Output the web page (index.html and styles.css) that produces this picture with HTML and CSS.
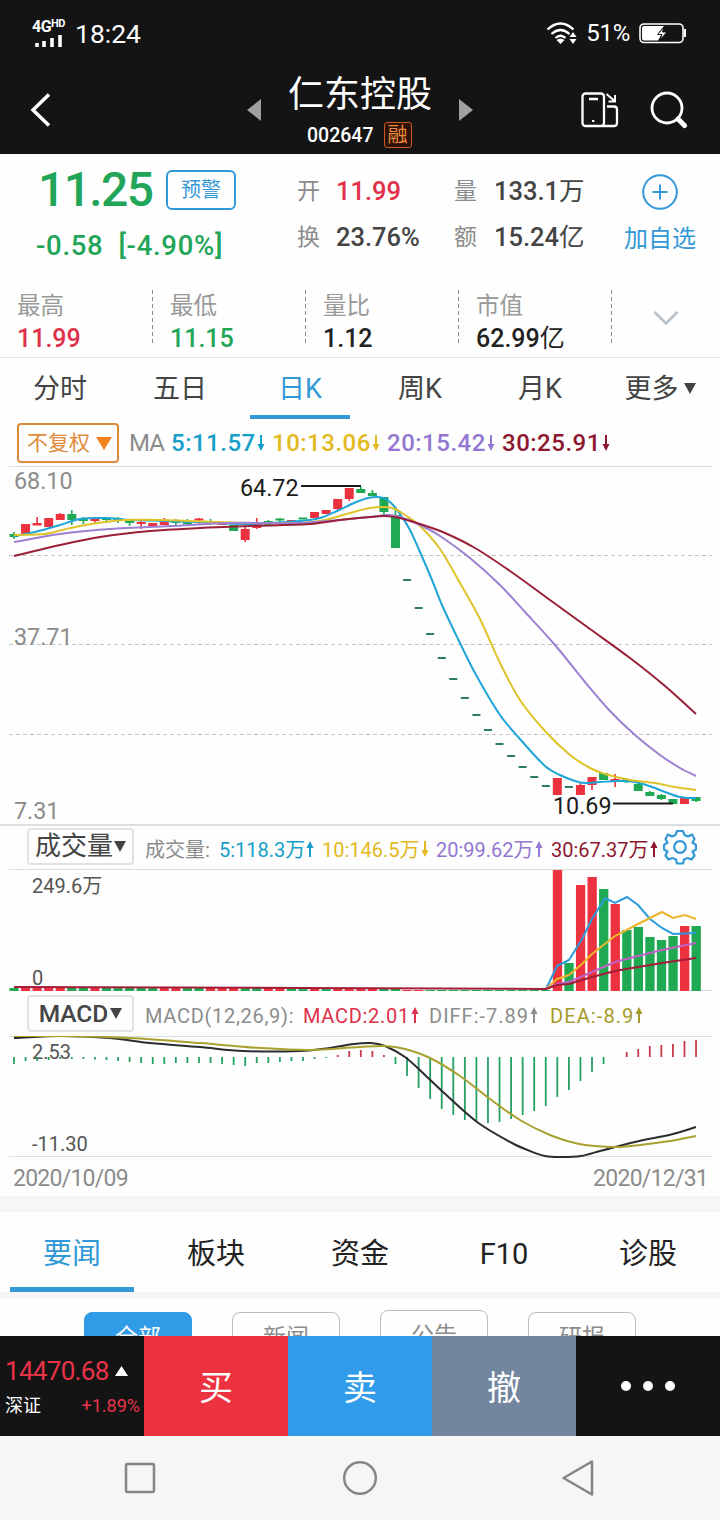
FILE: index.html
```html
<!DOCTYPE html>
<html lang="zh-CN">
<head>
  <meta charset="UTF-8" />
  <meta name="viewport" content="width=device-width, initial-scale=1.0"/>
  <title>仁东控股 002647</title>
  <link rel="stylesheet" href="styles.css">
</head>
<body>
  <svg class="symbols" width="0" height="0">
    <symbol id="down" viewBox="0 0 8 18"><path d="M4 1V13" stroke="currentColor" stroke-width="2"/><path d="M0.5 10H7.5L4 17Z" fill="currentColor"/></symbol>
    <symbol id="up" viewBox="0 0 8 18"><path d="M4 5V17" stroke="currentColor" stroke-width="2"/><path d="M0.5 8H7.5L4 1Z" fill="currentColor"/></symbol>
  </svg>

  <div class="statusbar">
    <div class="signal">
      <div class="net">4G<sup>HD</sup></div>
      <svg width="30" height="13" viewBox="0 0 30 13"><path d="M5 8V12M12 6V12M20 3V12M28 0V12" stroke="#fff" stroke-width="3.6"/></svg>
    </div>
    <span class="clock">18:24</span>
    <svg class="wifi" width="32" height="22" viewBox="0 0 32 22">
      <path d="M1.5 7.5Q14.5-4.5 27.5 7.5M5.5 12Q14.5 4 23.5 12M9.500 16Q14.500 11.500 19.500 16" fill="none" stroke="#fff" stroke-width="2.3"/>
      <path d="M10.500 18Q14.500 15 18.500 18L14.500 22Z" fill="#fff"/>
      <path d="M23.500 15H30.500L27 10ZM23.500 17H30.500L27 22Z" fill="#fff"/>
    </svg>
    <span class="percent">51%</span>
    <svg width="48" height="21" viewBox="0 0 48 21">
      <rect x="1" y="1" width="43" height="18.500" rx="4" fill="none" stroke="#fff" stroke-width="1.600"/>
      <path d="M5 3H25L19 10.500H23L19 17.500H5Q3 17.500 3 15.500V5Q3 3 5 3Z" fill="#fff"/>
      <path d="M25 4L18.500 11.500H23L21 17L28 9H23.500Z" fill="#fff" stroke="#141414"/>
      <path d="M46 6V14" stroke="#fff" stroke-width="2"/>
    </svg>
  </div>

  <div class="header">
    <svg class="back" width="22" height="36" viewBox="0 0 22 36"><path d="M19 2.500L3 18L19 33.500" fill="none" stroke="#fff" stroke-width="3.500"/></svg>
    <svg class="prev" width="14" height="22" viewBox="0 0 14 22"><path d="M14 0V22L0 11Z" fill="#a0a0a0"/></svg>
    <div class="stock">
      <h1>仁东控股</h1>
      <div class="code">002647 <span class="tag">融</span></div>
    </div>
    <svg class="next" width="14" height="22" viewBox="0 0 14 22"><path d="M0 0V22L14 11Z" fill="#a0a0a0"/></svg>
    <svg class="rotate" width="38" height="36" viewBox="0 0 38 36" fill="none" stroke="#fff" stroke-width="2.300">
      <rect x="1.500" y="1.500" width="21.500" height="32.500" rx="3"/>
      <path d="M8 7H17M12.200 28V30"/>
      <path d="M26 14.500H33Q36 14.500 36 17.500V31Q36 34 33 34H21"/>
      <path d="M25.500 2L33 8.500M34 3V9.500H27.500" stroke-width="2"/>
    </svg>
    <svg class="search" width="38" height="38" viewBox="0 0 38 38" fill="none" stroke="#fff"><circle cx="17" cy="17" r="15" stroke-width="2.800"/><path d="M28 28L34.500 34.500" stroke-width="5" stroke-linecap="round"/></svg>
  </div>

  <div class="quote">
    <div class="quote-top">
      <div class="price">
        <div class="price-line"><span class="last">11.25</span><span class="warn">预警</span></div>
        <div class="change">-0.58&nbsp; [-4.90%]</div>
      </div>
      <div class="pairs">
        <span>开</span><b class="red">11.99</b><span>量</span><b>133.1<em>万</em></b>
        <span>换</span><b>23.76%</b><span>额</span><b>15.24<em>亿</em></b>
      </div>
      <div class="add">
        <svg width="36" height="36" viewBox="0 0 36 36" fill="none" stroke="#3398d6" stroke-width="2"><circle cx="18" cy="18" r="16.800"/><path d="M18 10.500V25.500M10.500 18H25.500"/></svg>
        <span>加自选</span>
      </div>
    </div>
    <div class="quote-low">
      <div><span>最高</span><b class="red">11.99</b></div>
      <div><span>最低</span><b class="green">11.15</b></div>
      <div><span>量比</span><b>1.12</b></div>
      <div><span>市值</span><b>62.99<em>亿</em></b></div>
      <svg width="26" height="16" viewBox="0 0 26 16"><path d="M1.500 2L13 13.500L24.500 2" fill="none" stroke="#b9c1c9" stroke-width="2.600"/></svg>
    </div>
  </div>

  <div class="period">
    <span>分时</span><span>五日</span><span class="on">日K</span><span>周K</span><span>月K</span><span>更多<svg width="12" height="11" viewBox="0 0 12 11"><path d="M0 0H12L6 11Z" fill="#444"/></svg></span>
  </div>

  <div class="ma">
    <span class="adjust">不复权<svg width="16" height="13" viewBox="0 0 16 13"><path d="M0 0H16L8 13Z" fill="#f58220"/></svg></span>
    <span class="ma-name">MA</span>
    <span class="c5">5:11.57<svg class="arrow"><use href="#down"/></svg></span>
    <span class="c10">10:13.06<svg class="arrow"><use href="#down"/></svg></span>
    <span class="c20">20:15.42<svg class="arrow"><use href="#down"/></svg></span>
    <span class="c30">30:25.91<svg class="arrow"><use href="#down"/></svg></span>
  </div>

  <svg class="chart" id="kline" width="720" height="358" viewBox="0 466 720 358">
    <path class="rule" d="M9 466.500H712"/>
    <path class="grid" d="M9 555.500H712M9 644.500H712M9 734.500H712"/>
    <text class="scale" x="14" y="489">68.10</text>
    <text class="scale" x="14" y="645">37.71</text>
    <text class="scale" x="14" y="819">7.31</text>
  </svg>

  <div class="indicator vol">
    <span class="pick">成交量<svg width="12" height="11" viewBox="0 0 12 11"><path d="M0 0H12L6 11Z" fill="#444"/></svg></span>
    <span class="ind-name">成交量:</span>
    <span class="c5">5:118.3万<svg class="arrow"><use href="#up"/></svg></span>
    <span class="c10">10:146.5万<svg class="arrow"><use href="#down"/></svg></span>
    <span class="c20">20:99.62万<svg class="arrow"><use href="#up"/></svg></span>
    <span class="c30">30:67.37万<svg class="arrow"><use href="#up"/></svg></span>
    <svg class="gear" width="34" height="36" viewBox="0 0 34 36" fill="none" stroke="#3398d6" stroke-width="2.200">
      <path d="M14 2H20L21.500 6L25 7.500L29 5.500L31.500 10L29.500 13.500L33 16V20.500L29.500 22.500L31.500 26.500L28.500 30.500L24.500 29L21 30.500L20 34.500H14L13 30.500L9.500 29L5.500 30.500L2.500 26.500L4.500 22.500L1 20.500V16L4.500 13.500L2.500 10L5 5.500L9 7.500L12.500 6Z" stroke-linejoin="round"/>
      <circle cx="17" cy="18" r="5.800"/>
    </svg>
  </div>

  <svg class="chart" id="volume" width="720" height="122" viewBox="0 869 720 122">
    <path class="rule" d="M9 869.500H712M9 990.500H712"/>
    <text class="mark" x="32" y="893">249.6万</text>
    <text class="mark" x="32" y="985">0</text>
  </svg>

  <div class="indicator macd">
    <span class="pick">MACD<svg width="12" height="11" viewBox="0 0 12 11"><path d="M0 0H12L6 11Z" fill="#444"/></svg></span>
    <span class="ind-name">MACD(12,26,9):</span>
    <span class="red">MACD:2.01<svg class="arrow"><use href="#up"/></svg></span>
    <span class="diff">DIFF:-7.89<svg class="arrow"><use href="#up"/></svg></span>
    <span class="dea">DEA:-8.9<svg class="arrow"><use href="#up"/></svg></span>
  </div>

  <svg class="chart" id="macd" width="720" height="122" viewBox="0 1036 720 122">
    <path class="rule" d="M9 1036.500H712M9 1156.500H712"/>
    <text class="mark" x="32" y="1059">2.53</text>
    <text class="mark" x="32" y="1151">-11.30</text>
  </svg>

  <div class="dates"><span>2020/10/09</span><span>2020/12/31</span></div>

  <div class="news">
    <span class="on">要闻</span><span>板块</span><span>资金</span><span>F10</span><span>诊股</span>
  </div>
  <div class="pills">
    <span class="on">全部</span><span>新闻</span><span class="tall">公告</span><span>研报</span>
  </div>

  <div class="trade">
    <div class="index">
      <div class="point">14470.68<svg width="13" height="10" viewBox="0 0 13 10"><path d="M0 10H13L6.500 0Z" fill="#fff"/></svg></div>
      <div class="rate"><span>深证</span><span class="up">+1.89%</span></div>
    </div>
    <div class="buy">买</div>
    <div class="sell">卖</div>
    <div class="cancel">撤</div>
    <div class="more"><i></i><i></i><i></i></div>
  </div>

  <div class="navbar">
    <svg width="32" height="32" viewBox="0 0 32 32"><rect x="2" y="2" width="28" height="28" rx="1.500"/></svg>
    <svg width="36" height="36" viewBox="0 0 36 36"><circle cx="18" cy="18" r="15.800"/></svg>
    <svg width="34" height="38" viewBox="0 0 34 38"><path d="M31 2.500V35.500L2.500 19Z" stroke-linejoin="round"/></svg>
  </div>

  <script src="chart.js"></script>
</body>
</html>
```
FILE: styles.css
```css
body {
  margin: 0;
  width: 720px;
  height: 1520px;
  overflow: hidden;
  background: #fdfefd;
  font-family: Roboto, "Noto Sans CJK SC", sans-serif;
  color: #222;
}
svg {
  display: block;
  flex: none;
}
.symbols {
  position: absolute;
}
span, b {
  white-space: nowrap;
}
b {
  font-weight: 500;
}
em {
  font-style: normal;
  font-weight: 400;
}
.red { color: #e0304a; }
.green { color: #22a558; }
.c5 { color: #159fca; }
.c10 { color: #e2b91e; }
.c20 { color: #9377d2; }
.c30 { color: #8e1730; }
.diff { color: #8c8c8c; }
.dea { color: #a69a2a; }

/* top */
.statusbar {
  display: flex;
  align-items: center;
  box-sizing: border-box;
  height: 66px;
  padding: 0 33px 0 32px;
  background: #141414;
  color: #fff;
}
.signal {
  width: 36px;
  height: 30px;
}
.net {
  height: 17px;
  font-size: 16px;
  font-weight: 700;
  line-height: 17px;
  letter-spacing: -0.5px;
  white-space: nowrap;
}
.net sup {
  font-size: 11px;
  line-height: 0;
  vertical-align: 5px;
}
.clock {
  margin-left: 7px;
  font-size: 26.500px;
}
.wifi {
  margin-left: auto;
}
.percent {
  margin: 0 9px 0 8px;
  font-size: 24px;
  letter-spacing: -0.3px;
}
.header {
  display: flex;
  align-items: center;
  height: 88px;
  background: #141414;
  color: #fff;
}
.back { margin-left: 30px; }
.prev { margin-left: 195px; }
.next { margin-left: 27px; }
.rotate { margin-left: 108px; }
.search { margin-left: 31px; }
.stock {
  width: 144px;
  margin-left: 27px;
}
.stock h1 {
  margin: 0;
  font-size: 36px;
  font-weight: 400;
  line-height: 50px;
  white-space: nowrap;
}
.code {
  display: flex;
  align-items: center;
  gap: 10px;
  height: 30px;
  padding-left: 19px;
  font-size: 19.500px;
  font-weight: 500;
}
.tag {
  box-sizing: border-box;
  width: 28px;
  height: 26px;
  border: 1.500px solid #c85a22;
  border-radius: 3px;
  color: #f08a3c;
  background: #2e1206;
  font-size: 20px;
  font-weight: 400;
  line-height: 25px;
  text-align: center;
}

/* quote */
.quote {
  height: 204px;
  border-bottom: 1px solid #dfe2e2;
  box-sizing: border-box;
}
.quote-top {
  display: flex;
  height: 124px;
}
.price {
  width: 297px;
}
.price-line {
  display: flex;
  align-items: center;
  gap: 12px;
  height: 72px;
  padding-left: 38px;
}
.last {
  width: 116px;
  color: #22a558;
  font-size: 48px;
  font-weight: 500;
  line-height: 72px;
  letter-spacing: -1.6px;
}
.warn {
  box-sizing: border-box;
  width: 70px;
  height: 40px;
  border: 2px solid #3398d6;
  border-radius: 6px;
  color: #3398d6;
  font-size: 20px;
  line-height: 37px;
  text-align: center;
}
.change {
  padding-left: 36px;
  color: #22a558;
  font-size: 27.500px;
  font-weight: 500;
  line-height: 40px;
  letter-spacing: 0.7px;
}
.pairs {
  display: grid;
  grid-template-columns: 39px 118px 40px 130px;
  grid-template-rows: 46px 46px;
  align-content: start;
  padding-top: 15px;
}
.pairs span {
  color: #8c8c8c;
  font-size: 23px;
  line-height: 45px;
}
.pairs b {
  color: #444;
  font-size: 25.500px;
  line-height: 45px;
}
.pairs b.red { color: #e0304a; }
.add {
  display: flex;
  flex-direction: column;
  align-items: center;
  width: 72px;
  padding-top: 20px;
  color: #3398d6;
  font-size: 24px;
  line-height: 58px;
}
.quote-low {
  display: flex;
}
.quote-low div {
  display: flex;
  flex-direction: column;
  box-sizing: border-box;
  width: 153px;
  height: 65px;
  padding: 12px 0 0 17px;
  background: repeating-linear-gradient(#8c8c8c 0 4px, transparent 4px 7px) right 12px / 1px 53px no-repeat;
}
.quote-low span {
  color: #999;
  font-size: 23.500px;
  line-height: 32px;
}
.quote-low b {
  font-size: 25px;
  line-height: 33px;
}
.quote-low > svg {
  margin: 32px 0 0 41px;
}

/* k line */
.period {
  display: grid;
  grid-template-columns: repeat(6, 120px);
  height: 62px;
}
.period span {
  display: flex;
  align-items: center;
  justify-content: center;
  box-sizing: border-box;
  width: 100px;
  height: 61px;
  margin: 0 10px;
  border-bottom: 4px solid transparent;
  color: #444;
  font-size: 27px;
}
.period .on {
  color: #3398d6;
  border-color: #3398d6;
}
.period svg {
  margin: 4px 0 0 5px;
}
.ma {
  display: grid;
  grid-template-columns: 112px 42px 101px 115px 115px 120px;
  align-items: center;
  height: 46px;
  padding-left: 17px;
  font-size: 24px;
  font-weight: 500;
  letter-spacing: 0.5px;
}
.adjust {
  display: flex;
  align-items: center;
  justify-content: space-between;
  box-sizing: border-box;
  width: 102px;
  height: 40px;
  padding: 0 5px 0 8px;
  border: 2px solid #e08a3c;
  border-radius: 4px;
  color: #e08a3c;
  font-size: 21px;
  font-weight: 400;
  line-height: 34px;
  letter-spacing: 0;
}
.ma-name {
  color: #8c8c8c;
  font-weight: 400;
  letter-spacing: -1px;
}
.arrow {
  display: inline-block;
  width: 8px;
  height: 18px;
  margin-left: 1px;
  vertical-align: -1px;
}
.rule {
  stroke: #dcdfdf;
}
.grid {
  stroke: #c4c4c4;
  stroke-dasharray: 4 3;
}
.scale {
  fill: #8c8c8c;
  font-size: 23.300px;
}
.peak {
  fill: #1c1c1c;
  font-size: 23.300px;
}
.mark {
  fill: #555;
  font-size: 20px;
}

/* indicators */
.indicator {
  display: grid;
  align-items: center;
  height: 45px;
  padding-left: 27px;
  font-size: 20px;
}
.vol {
  box-sizing: border-box;
  border-top: 2px solid #dcdfdf;
  grid-template-columns: 118px 74px 103px 114px 115px 112px 40px;
}
.vol > span {
  padding-top: 1px;
}
.vol .pick, .vol .gear {
  margin-top: -2px;
  padding: 0;
}
.macd {
  grid-template-columns: 118px 158px 126px 121px 120px;
  letter-spacing: 0.7px;
}
.macd > span {
  padding-top: 4px;
}
.macd .dea {
  letter-spacing: 1.1px;
}
.macd .diff {
  letter-spacing: 1px;
}
.pick {
  display: flex;
  align-items: center;
  justify-content: center;
  gap: 1px;
  box-sizing: border-box;
  width: 107px;
  height: 37px;
  border: 2px solid #e2e2e2;
  border-radius: 4px;
  color: #444;
  font-size: 26px;
  line-height: 33px;
  letter-spacing: 0;
}
.macd .pick {
  gap: 2px;
  padding: 0;
  font-size: 24.500px;
  font-weight: 500;
}
.ind-name {
  color: #8c8c8c;
}
.dates {
  display: flex;
  justify-content: space-between;
  height: 38px;
  padding: 0 12px 0 13px;
  color: #8c8c8c;
  font-size: 23px;
  line-height: 42px;
  letter-spacing: -0.750px;
}

/* news */
.news {
  display: grid;
  grid-template-columns: repeat(5, 144px);
  height: 80px;
  border-top: 16px solid #f6f6f6;
  border-bottom: 7px solid #f6f6f6;
}
.news span {
  box-sizing: border-box;
  width: 124px;
  height: 80px;
  margin: 0 10px;
  border-bottom: 5px solid transparent;
  font-size: 29px;
  line-height: 85px;
  text-align: center;
}
.news .on {
  color: #3398d6;
  border-color: #3398d6;
}
.pills {
  display: flex;
  gap: 40px;
  box-sizing: border-box;
  height: 37px;
  padding: 13px 84px 0;
  overflow: hidden;
}
.pills span {
  box-sizing: border-box;
  width: 108px;
  height: 50px;
  border: 1px solid #bbb;
  border-radius: 8px;
  color: #8c8c8c;
  font-size: 23px;
  line-height: 49px;
  text-align: center;
}
.pills .on {
  border-color: #309be6;
  background: #309be6;
  color: #fff;
}
.pills .tall {
  margin-top: -2px;
}

/* bottom */
.trade {
  display: grid;
  grid-template-columns: repeat(5, 144px);
  grid-template-rows: 100px;
  height: 100px;
  background: #141414;
  color: #fff;
  font-size: 34px;
  line-height: 104px;
  text-align: center;
}
.buy { background: #eb323e; }
.sell { background: #309be9; }
.cancel { background: #72879f; }
.buy, .sell, .cancel {
  height: 100px;
}
.index {
  padding: 18px 4px 0 5px;
  text-align: left;
}
.point {
  display: flex;
  align-items: center;
  gap: 6px;
  color: #ea3349;
  font-size: 26px;
  line-height: 34px;
  letter-spacing: -0.7px;
}
.rate {
  display: flex;
  justify-content: space-between;
  font-size: 18px;
  line-height: 36px;
}
.up { color: #ea3349; }
.more {
  display: flex;
  align-items: center;
  justify-content: center;
  gap: 12px;
}
.more i {
  width: 10px;
  height: 10px;
  border-radius: 50%;
  background: #fff;
}
.navbar {
  display: grid;
  grid-template-columns: 140px 300px 135px;
  justify-items: center;
  align-items: center;
  height: 84px;
  padding-left: 70px;
  background: #f6f6f6;
}
.navbar svg {
  fill: none;
  stroke: #858585;
  stroke-width: 2.500;
}
```
FILE: chart.js
```js
const RED = "#eb323e";
const GREEN = "#1fa953";
const STEP = 11.56;
const xAt = i => 14 + i * STEP;

function add(parent, tag, attrs, text) {
  const el = document.createElementNS("http://www.w3.org/2000/svg", tag);
  for (const k in attrs) el.setAttribute(k, attrs[k]);
  if (text) el.textContent = text;
  parent.appendChild(el);
}

function line(svg, pts, color, smooth = true) {
  const last = pts.length - 1;
  const slope = i => {
    const a = pts[Math.max(i - 1, 0)], c = pts[Math.min(i + 1, last)];
    return (c[1] - a[1]) / (c[0] - a[0]);
  };
  let d = "M" + pts[0];
  for (let i = 0; i < last; i++) {
    const b = pts[i], c = pts[i + 1], h = (c[0] - b[0]) / 3;
    d += smooth
      ? `C${b[0] + h},${b[1] + h * slope(i)} ${c[0] - h},${c[1] - h * slope(i + 1)} ${c}`
      : "L" + c;
  }
  add(svg, "path", { d, fill: "none", stroke: color, "stroke-width": 2 });
}

// candles: colour, body top, body bottom, wick top, wick bottom
const candles = [
  ["g", 534, 537, 532, 539], ["r", 524, 535], ["r", 523, 525.5, 517, 525], ["r", 518, 527], ["r", 514, 520, 513, 520],
  ["g", 514, 520, 510, 525], ["g", 519, 521, 517, 524], ["r", 519, 521, 518, 523], ["g", 518, 520, 517, 523], ["g", 518, 520, 517, 523],
  ["g", 521, 523, 520, 526], ["r", 522, 524, 521, 529], ["r", 523, 526], ["r", 522, 525, 518, 525], ["g", 522, 523, 519, 526],
  ["g", 522, 524, 519, 525], ["r", 518.5, 520.5, 518, 524], ["g", 521, 523, 519, 525], ["r", 523, 525], ["g", 525, 531],
  ["r", 529, 540, 527, 542], ["r", 524, 528, 518, 529], ["g", 521, 526, 520, 526], ["g", 518.5, 520.5, 518, 523], ["r", 520, 522],
  ["g", 517.5, 519.5], ["r", 512, 518], ["r", 510, 514], ["r", 499, 509, 499, 511], ["r", 488, 499, 488, 501],
  ["g", 489, 493, 487, 493], ["g", 493, 496, 490, 496], ["g", 497, 512, 497, 515], ["g", 515, 548, 510, 548]
];
[580, 608, 634, 658, 679, 698, 715, 730, 744, 756, 767, 777, 786].forEach(y => candles.push(["g", y - 1, y + 1]));
candles.push(
  ["r", 778, 795], ["g", 786, 788], ["r", 785, 795, 783, 795], ["r", 777, 785, 777, 790], ["g", 773, 780],
  ["r", 779, 781, 774, 787], ["g", 779, 782, 778, 783], ["g", 784, 791, 781, 791], ["g", 792, 796, 791, 796],
  ["g", 795, 799, 794, 800], ["g", 799, 804], ["r", 798, 804], ["g", 797, 801, 797, 802]
);

const k = document.getElementById("kline");
candles.forEach(([c, top, bottom, high, low], i) => {
  // limit-down days are a thin dash
  const dash = i > 33 && i < 49 && bottom - top == 2;
  const x = xAt(i), w = dash ? 8 : 9;
  const fill = dash ? "#2c7d5c" : c == "r" ? RED : GREEN;
  add(k, "rect", { x: x - w / 2, y: top, width: w, height: bottom - top, fill });
  if (high) add(k, "rect", { x: x - 0.8, y: high, width: 1.6, height: low - high, fill });
});
line(k, [[14,536],[35,532],[60,525],[80,519],[105,518],[130,520],[200,522],[245,524],[300,521],[320,518],[337,511],[354,503],[368,498],[378,497],[386,499],[394,506],[402,517],[410,530],[420,552],[432,580],[442,605],[458,639],[475,673],[500,715],[520,739],[545,766],[560,775],[575,781],[585,783],[600,782],[618,781],[635,782],[652,787],[665,792],[680,797],[690,798],[696,798]], "#20a5d8");
line(k, [[14,535],[45,534],[62,530],[80,526],[105,522],[125,520],[160,520],[250,523],[300,523],[325,520],[350,513],[370,508],[385,507],[395,509],[405,515],[420,526],[440,549],[460,583],[480,619],[500,663],[520,700],[545,731],[570,755],[590,768],[605,774],[630,780],[655,783],[675,787],[696,790]], "#dfc32a");
line(k, [[14,542],[60,534],[110,529],[170,526],[230,523],[300,523],[340,520],[370,517],[388,515],[400,517],[420,525],[440,536],[470,558],[500,585],[525,612],[555,645],[585,682],[610,711],[635,735],[660,755],[680,768],[696,776]], "#9d80d2");
line(k, [[14,556],[60,545],[100,537],[150,531],[200,528],[250,526],[310,524],[340,520],[370,517],[385,516],[400,518],[420,524],[445,533],[475,548],[510,571],[550,600],[590,629],[630,658],[665,686],[696,714]], "#9a2038");
add(k, "path", { d: "M301 486H361M613 803.5H673", stroke: "#1c1c1c", "stroke-width": 2 });
add(k, "text", { x: 240, y: 496, class: "peak" }, "64.72");
add(k, "text", { x: 553, y: 814, class: "peak" }, "10.69");

// volume
const v = document.getElementById("volume");
const flat = "grrrrggrgggggrrggrrrggrrggrgrrrrggrrg";
for (let i = 0; i < 47; i++) {
  const fill = flat[i] == "r" ? RED : GREEN;
  add(v, "rect", { x: xAt(i) - 4.5, y: i > 33 ? 990 : 988, width: 9, height: 3, fill });
}
[["r", 870], ["g", 963], ["r", 885], ["r", 877], ["g", 889], ["r", 904], ["g", 930], ["g", 927], ["g", 937], ["g", 940], ["g", 936], ["r", 926], ["g", 926]].forEach(([c, y], i) => {
  add(v, "rect", { x: xAt(i + 47) - 4.5, y, width: 9.3, height: 991 - y, fill: c == "r" ? RED : GREEN });
});
line(v, [[546,989],[557,966],[569,960],[582,939],[592,919],[605,898],[615,903],[627,897],[638,905],[650,919],[662,928],[673,934],[696,933]], "#2b9bdc", false);
line(v, [[546,989],[557,979],[569,975],[582,964],[592,954],[615,936],[638,924],[662,912],[673,918],[685,915],[696,919]], "#ecb52c", false);
line(v, [[546,989],[557,984],[569,982],[592,972],[615,962],[638,956],[662,950],[696,943]], "#c160c8", false);
line(v, [[14,987],[300,988],[546,989],[557,985],[569,984],[592,977],[615,971],[638,967],[662,963],[696,958]], "#a31d38", false);

// macd, bars hang from 1057
const m = document.getElementById("macd");
const hist = [
  1064, 1061, 1061, 1060, 1059, 1059, 1059, 1059.5, 1060, 1061, 1062, 1063, 1064, 1064, 1063, 1063, 1063, 1063, 1064, 1065,
  1066, 1063, 1063, 1062, 1061, 1061, 1059, 1058, 1055, 1051, 1050, 1051, 1055, 1064, 1076, 1088, 1099, 1109, 1115, 1120,
  1121, 1123, 1122, 1119, 1115, 1111, 1106, 1097, 1090, 1081, 1072, 1064, 1057, 1052, 1049, 1046, 1045, 1044, 1041, 1040
];
hist.forEach((y, i) => {
  add(m, "rect", { x: xAt(i) - 0.9, y: Math.min(y, 1057), width: 1.8, height: Math.abs(y - 1057), fill: y < 1057 ? "#c8394a" : "#25a065" });
});
line(m, [[14,1038],[60,1036],[110,1038],[150,1043],[200,1047],[243,1051],[300,1051],[330,1048],[350,1044.500],[371,1043],[385,1046],[405,1057],[425,1075],[443,1092],[477,1122],[512,1143],[530,1151],[545,1156],[560,1157],[581,1156],[600,1151],[635,1142],[673,1134],[696,1127]], "#2c2c30");
line(m, [[14,1036],[65,1036],[130,1038],[200,1043],[260,1048],[310,1050],[360,1047],[385,1046],[405,1049],[430,1058],[460,1076],[490,1099],[520,1120],[550,1135],[575,1143],[595,1146],[620,1147],[640,1145],[670,1141],[696,1136]], "#a9a030");
```
